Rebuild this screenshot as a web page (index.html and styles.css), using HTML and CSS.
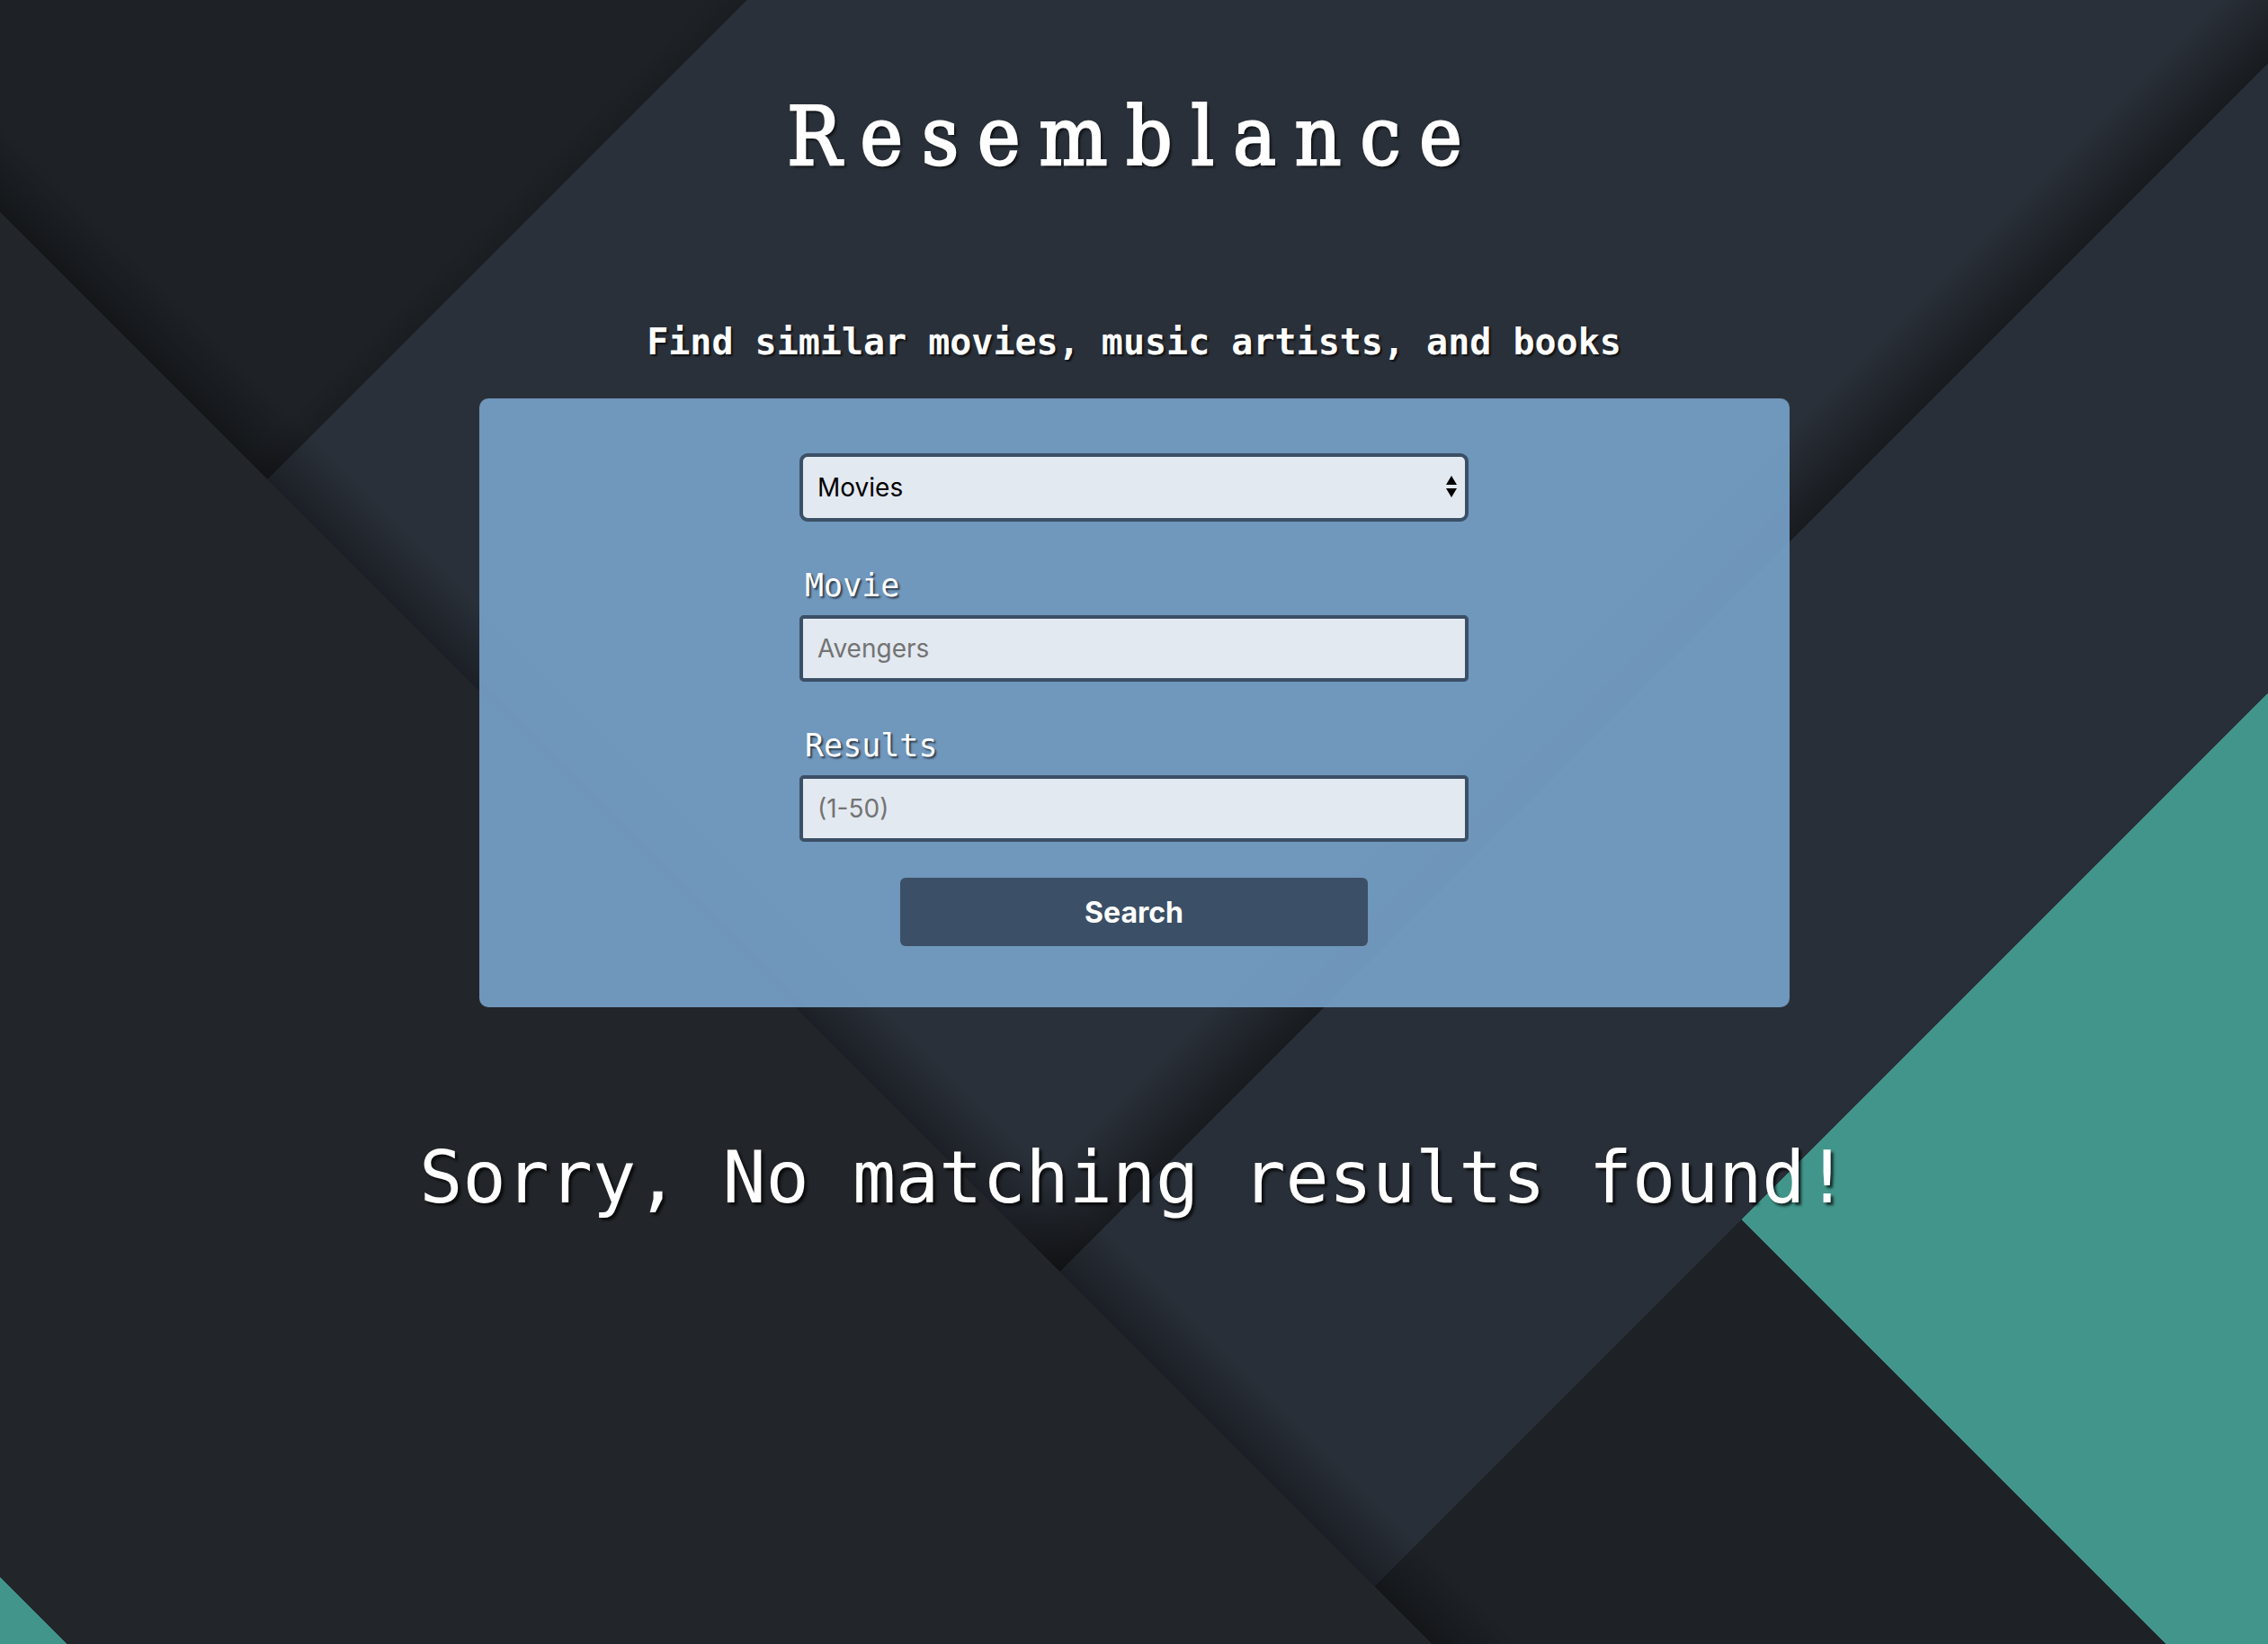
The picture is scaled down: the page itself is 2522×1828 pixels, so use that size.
FILE: index.html
```html
<!DOCTYPE html>
<html lang="en">
<head>
<meta charset="utf-8">
<title>Resemblance</title>
<link rel="stylesheet" href="styles.css">
</head>
<body>
<header class="masthead">
  <h1 class="brand">Resemblance</h1>
  <h2 class="tagline">Find similar movies, music artists, and books</h2>
</header>
<main class="content">
  <form class="search-card">
    <div class="field">
      <div class="select-wrap">
        <select class="control select" aria-label="Category">
          <option>Movies</option>
          <option>Music</option>
          <option>Books</option>
        </select>
      </div>
    </div>
    <div class="field">
      <label class="field-label" for="query">Movie</label>
      <input class="control" id="query" type="text" placeholder="Avengers">
    </div>
    <div class="field">
      <label class="field-label" for="count">Results</label>
      <input class="control" id="count" type="text" placeholder="(1-50)">
    </div>
    <button class="search-btn" type="button">Search</button>
  </form>
  <p class="no-results">Sorry, No matching results found!</p>
</main>
</body>
</html>
```

FILE: styles.css
```css
* {
  box-sizing: border-box;
}

html {
  background: #1e2227;
}

body {
  margin: 0;
  min-height: 100vh;
  color: #ffffff;
  font-family: "DejaVu Sans Mono", monospace;
  background:
    linear-gradient(225deg, transparent 3023px, #41958a 3023px),
    linear-gradient(225deg, transparent 1880px, rgba(0, 0, 0, 0.34) 1950px, #222529 1950px),
    linear-gradient(135deg,
      #1e2227 0, #1e2227 555px, #1a1d22 587px,
      #2a3039 587px, #2a3039 1745px, #181b1f 1833px,
      #292f38 1833px, #292f38 2328px, transparent 2328px),
    linear-gradient(225deg, #41958a 1373px, transparent 1373px),
    #1e2227;
}

.masthead {
  padding-top: 100px;
  text-align: center;
}

.brand {
  margin: 0;
  font-family: "DejaVu Serif Condensed", "DejaVu Serif", serif;
  font-stretch: condensed;
  font-weight: 400;
  font-size: 89px;
  line-height: 104px;
  letter-spacing: 21px;
  -webkit-text-stroke: 2.5px #ffffff;
  text-shadow: 3px 3px 3px rgba(0, 0, 0, 0.7);
}

.tagline {
  margin: 153px 0 0;
  font-size: 40px;
  line-height: 47px;
  font-weight: 700;
  text-shadow: 2px 2px 2px rgba(0, 0, 0, 0.7);
}

.search-card {
  width: 1457px;
  margin: 39px auto 0;
  padding: 61px 0 68px;
  display: flex;
  flex-direction: column;
  align-items: center;
  background: rgba(117, 159, 198, 0.93);
  border-radius: 10px;
}

.field {
  width: 744px;
  display: flex;
  flex-direction: column;
}

.field-label {
  margin: 51px 0 12px;
  padding-left: 6px;
  font-size: 35px;
  line-height: 41px;
  text-shadow: 2px 2px 2px rgba(0, 0, 0, 0.6);
}

.control {
  width: 100%;
  height: 74px;
  padding: 0 16px;
  border: 4px solid #3b4f66;
  border-radius: 5px;
  background: #e3e9f1;
  color: #000000;
  font-family: Inter, "Liberation Sans", sans-serif;
  font-size: 28px;
  outline: none;
}

.control::placeholder {
  color: #737373;
}

.select-wrap {
  position: relative;
}

.select {
  height: 76px;
  border-radius: 9px;
  appearance: none;
  -webkit-appearance: none;
}

.select-wrap::before,
.select-wrap::after {
  content: "";
  position: absolute;
  right: 13px;
  width: 0;
  height: 0;
  border-left: 6.5px solid transparent;
  border-right: 6.5px solid transparent;
  pointer-events: none;
}

.select-wrap::before {
  top: 25px;
  border-bottom: 10px solid #000000;
}

.select-wrap::after {
  top: 39px;
  border-top: 10px solid #000000;
}

.search-btn {
  margin-top: 40px;
  width: 520px;
  height: 76px;
  border: 0;
  border-radius: 6px;
  background: #3b4f66;
  color: #ffffff;
  font-family: Inter, "Liberation Sans", sans-serif;
  font-weight: 700;
  font-size: 32px;
}

.no-results {
  margin: 143px 0 0;
  text-align: center;
  font-size: 80px;
  line-height: 94px;
  text-shadow: 3px 3px 3px rgba(0, 0, 0, 0.7);
}
```
